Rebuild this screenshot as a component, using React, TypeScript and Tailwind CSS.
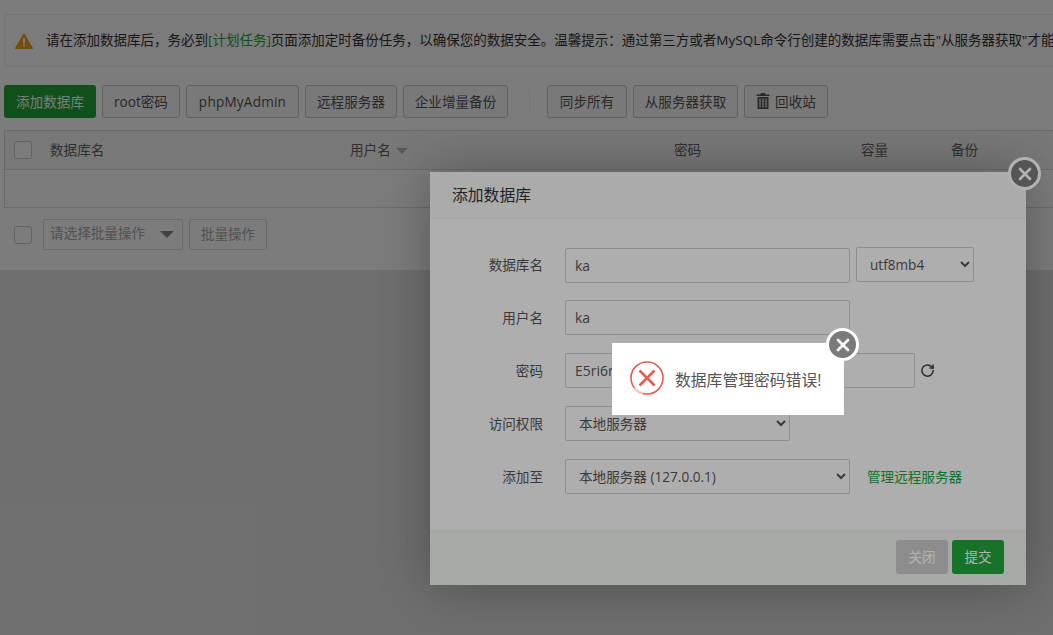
import { RotateCw, X } from 'lucide-react'

const toolbarLeft = [
  { label: 'root密码', w: 'w-[78px]' },
  { label: 'phpMyAdmin', w: 'w-[113px] tracking-[0.2px]' },
  { label: '远程服务器', w: 'w-[92px]' },
  { label: '企业增量备份', w: 'w-[105px]' },
]

function ToolButton({ label, w }: { label: string; w: string }) {
  return (
    <button className={`${w} h-[33px] pt-[2px] border border-[#c8c8c8] rounded-[3px] bg-[#fafafa] text-[#555] text-[13.6px] flex items-center justify-center whitespace-nowrap`}>
      {label}
    </button>
  )
}

function Checkbox() {
  return <span className="block w-[18px] h-[18px] border border-[#ccc] rounded-[3px] bg-white" />
}

function CloseBall({ className }: { className: string }) {
  return (
    <button className={`absolute w-[33px] h-[33px] rounded-full bg-[#7a7a7a] border-[3px] border-white flex items-center justify-center text-white ${className}`}>
      <X size={20} strokeWidth={3.2} />
    </button>
  )
}

function FormRow({ label, children }: { label: string; children: React.ReactNode }) {
  return (
    <div className="flex items-center h-[35px]">
      <label className="w-[113px] mr-[22px] pt-[2px] text-right text-[#555] text-[13.6px]">{label}</label>
      {children}
    </div>
  )
}

const inputCls = 'h-[35px] border border-[#ccc] rounded-[2px] px-[9px] text-[14px] text-[#555] bg-transparent outline-none'
const selectCls = 'h-[35px] border border-[#ccc] rounded-[2px] px-[9px] text-[13.6px] text-[#555] bg-transparent outline-none'

export default function App() {
  return (
    <div
      className="relative w-[1053px] h-[635px] overflow-hidden bg-[#e4e4e4]"
      style={{ fontFamily: '"Open Sans", "Noto Sans CJK SC", sans-serif' }}
    >
      <div className="w-[1300px] h-[270px] bg-white pl-1 pt-[14px]">
        <div className="h-[53px] border border-[#f0f0f0] bg-[#fdfdfd] flex items-center pl-[10px] text-[13.5px] text-[#333] whitespace-nowrap">
          <svg viewBox="0 0 18 16" className="w-[18px] h-[16px] mr-[13px] shrink-0">
            <path d="M9 .6 17.6 15.4H.4Z" fill="#f0a01e" stroke="#f0a01e" strokeLinejoin="round" />
            <rect x="8" y="5" width="2" height="5.6" rx=".8" fill="#fff" />
            <rect x="8" y="11.6" width="2" height="2" rx=".8" fill="#fff" />
          </svg>
          请在添加数据库后，务必到<span className="text-[#20a53a]">[计划任务]</span>页面添加定时备份任务，以确保您的数据安全。温馨提示：通过第三方或者MySQL命令行创建的数据库需要点击"从服务器获取"才能显示
        </div>

        <div className="flex items-center gap-[6px] mt-[18px]">
          <button className="w-[92px] h-[33px] pt-[2px] rounded-[3px] bg-[#20a53a] text-white text-[13.6px]">添加数据库</button>
          {toolbarLeft.map((b) => (
            <ToolButton key={b.label} {...b} />
          ))}
          <span className="w-px h-[25px] bg-[#eee] ml-[15px] mr-[11px]" />
          <ToolButton label="同步所有" w="w-[80px]" />
          <ToolButton label="从服务器获取" w="w-[105px]" />
          <button className="w-[84px] h-[33px] pt-[2px] border border-[#c8c8c8] rounded-[3px] bg-[#fafafa] text-[#555] text-[13.6px] flex items-center justify-center gap-[5px]">
            <svg viewBox="0 0 14 16" className="w-[14px] h-[16px] -mt-[4px]" fill="currentColor">
              <path d="M5 0h4l.6 1.6H13.5V3H.5V1.6h3.9zM1.5 4h11v12h-11zM3.4 5.5V14.6h1.2V5.5zm3 0V14.6h1.2V5.5zm3 0V14.6h1.2V5.5z" />
            </svg>
            回收站
          </button>
        </div>

        <div className="mt-3 h-[78px] border border-[#ddd] text-[13.6px] text-[#666]">
          <div className="h-[39px] border-b border-[#ddd] bg-[#f6f6f6] grid grid-cols-[45px_300px_324px_187px_90px_1fr] items-center">
            <div className="pl-[9px]"><Checkbox /></div>
            <div>数据库名</div>
            <div className="flex items-center gap-[5px]">
              用户名
              <span className="w-0 h-0 border-x-[6px] border-x-transparent border-t-[6px] border-t-[#bbb] mt-[2px]" />
            </div>
            <div>密码</div>
            <div>容量</div>
            <div>备份</div>
          </div>
        </div>

        <div className="flex items-center h-[31px] mt-[11px]">
          <div className="ml-[10px] mr-[11px]"><Checkbox /></div>
          <div className="w-[140px] h-[31px] border border-[#ddd] rounded-[2px] bg-white text-[#aaa] text-[13.6px] flex items-center justify-between pl-[6px] pr-[8px] pb-[3px]">
            请选择批量操作
            <span className="w-0 h-0 border-x-[7px] border-x-transparent border-t-[7px] border-t-[#888] mt-[3px]" />
          </div>
          <button className="ml-[6px] w-[78px] h-[31px] border border-[#ddd] rounded-[2px] bg-white text-[#aaa] text-[13.6px]">批量操作</button>
        </div>
      </div>

      <div className="absolute inset-0 bg-black/30" />

      <div className="absolute left-[430px] top-[172px] w-[596px] h-[413px] bg-[#f9f9f9] flex flex-col shadow-[1px_1px_50px_rgba(0,0,0,0.3)]">
        <div className="h-[47px] shrink-0 border-b border-[#eee] bg-[#f5f5f5] flex items-center pl-[22px] pt-[2px] text-[15.8px] text-[#333]">
          添加数据库
        </div>
        <div className="flex-1 pt-[28px] flex flex-col gap-[18px]">
          <FormRow label="数据库名">
            <input readOnly value="ka" className={`${inputCls} w-[285px] mt-[2px]`} />
            <select className={`${selectCls} w-[118px] ml-[6px]`} defaultValue="utf8mb4">
              <option>utf8mb4</option>
            </select>
          </FormRow>
          <FormRow label="用户名">
            <input readOnly value="ka" className={`${inputCls} w-[285px]`} />
          </FormRow>
          <FormRow label="密码">
            <input readOnly value="E5ri6rLmYzTbKa7N" className={`${inputCls} w-[350px]`} />
            <RotateCw size={15} strokeWidth={2.4} className="ml-[5px] text-[#444]" />
          </FormRow>
          <FormRow label="访问权限">
            <select className={`${selectCls} w-[225px]`} defaultValue="本地服务器">
              <option>本地服务器</option>
            </select>
          </FormRow>
          <FormRow label="添加至">
            <select className={`${selectCls} w-[285px]`} defaultValue="本地服务器 (127.0.0.1)">
              <option>本地服务器 (127.0.0.1)</option>
            </select>
            <a className="ml-[17px] pt-[2px] text-[#20a53a] text-[13.6px]">管理远程服务器</a>
          </FormRow>
        </div>
        <div className="h-[55px] shrink-0 border-t border-[#eaeaea] bg-[#f0f3f0] flex items-start justify-end gap-1 pt-[9px] pr-[22px]">
          <button className="w-[52px] h-[34px] rounded-[3px] bg-[#cbcbcb] text-white text-[13.6px]">关闭</button>
          <button className="w-[52px] h-[34px] rounded-[3px] bg-[#20a53a] text-white text-[13.6px]">提交</button>
        </div>
        <CloseBall className="-right-[15px] -top-[15px]" />
      </div>

      <div className="absolute inset-0 bg-black/30" />

      <div className="absolute left-[612px] top-[343px] w-[232px] h-[72px] bg-white flex items-center pl-[18px]">
        <svg viewBox="0 0 34 34" className="w-[34px] h-[34px] shrink-0 -mt-[3px]" fill="none">
          <circle cx="17" cy="17" r="16" stroke="#e8594f" strokeWidth="1.6" />
          <path d="M4 27A16 16 0 0 0 13 32.5" stroke="#f8c9c4" strokeWidth="2" />
          <path d="M9.5 9.5 24.5 24.5M24.5 9.5 9.5 24.5" stroke="#e8594f" strokeWidth="2.6" />
        </svg>
        <span className="ml-[11px] mt-[3px] text-[15.8px] text-[#555] whitespace-nowrap">数据库管理密码错误!</span>
        <CloseBall className="left-[214px] -top-[15px]" />
      </div>
    </div>
  )
}
